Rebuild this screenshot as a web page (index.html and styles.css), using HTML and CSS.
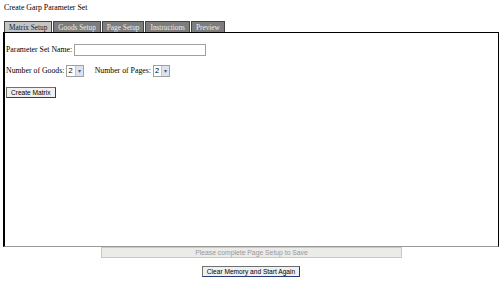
FILE: index.html
```html
<!DOCTYPE html>
<html lang="en">
<head>
    <meta charset="UTF-8">
    <title>Create Garp Parameter Set</title>
    <link rel="stylesheet" href="styles.css">
</head>
<body>

<div class="page">
    <div class="title">Create Garp Parameter Set</div>

    <!-- Pestañas -->
    <div class="tabs">
        <span class="tab active">Matrix Setup</span>
        <span class="tab">Goods Setup</span>
        <span class="tab">Page Setup</span>
        <span class="tab">Instructions</span>
        <span class="tab">Preview</span>
    </div>

    <div class="panel">
        <div class="row">
            <label>Parameter Set Name:</label>
            <span class="text-input"></span>
        </div>
        <div class="row options">
            <label>Number of Goods:</label>
            <span class="select"><span class="val">2</span><span class="arrow">&#9662;</span></span>
            <label class="second">Number of Pages:</label>
            <span class="select"><span class="val">2</span><span class="arrow">&#9662;</span></span>
        </div>
        <div class="row">
            <span class="btn">Create Matrix</span>
        </div>
    </div>

    <div class="save-bar">Please complete Page Setup to Save</div>

    <div class="footer">
        <span class="btn">Clear Memory and Start Again</span>
    </div>
</div>

</body>
</html>
```

FILE: styles.css
```css
* {
    box-sizing: border-box;
}

body {
    margin: 0;
    padding: 0;
    background-color: #ffffff;
    font-family: "Liberation Serif", serif;
    font-size: 7.8px;
    color: #000;
}

.page {
    padding: 3px 1px 0 3px;
}

.title {
    height: 18px;
    padding-left: 1px;
    line-height: 10px;
}

/* PESTAÑAS */
.tabs {
    display: flex;
    gap: 1px;
    padding-left: 1px;
    height: 11px;
}

.tab {
    height: 11px;
    padding: 0 4px;
    line-height: 11px;
    background-color: #7d7d7d;
    color: #ececec;
    border: 1px solid #444;
    border-bottom: none;
    font-size: 7.3px;
}

.tab.active {
    background-color: #c4c4c4;
    color: #222;
}

.panel {
    height: 215px;
    border: 1px solid #000;
    border-left-width: 2px;
    border-bottom: 1px solid #999;
    padding: 10px 1px;
}

.row {
    display: flex;
    align-items: center;
    height: 13px;
    margin-bottom: 8px;
}

.row.options {
    margin-bottom: 9px;
}

label.second {
    margin-left: 11px;
}

.text-input {
    width: 132px;
    height: 12px;
    margin-left: 2px;
    border: 1px solid #a0a0a0;
}

.select {
    display: flex;
    height: 12px;
    margin-left: 2px;
    border: 1px solid #a0a0a0;
    font-family: "Liberation Sans", sans-serif;
    font-size: 7.5px;
}

.select .val {
    padding: 0 2px 0 1px;
    line-height: 10px;
}

.select .arrow {
    width: 8px;
    background-color: #dde3ee;
    color: #4d5a78;
    text-align: center;
    font-size: 6px;
    line-height: 10px;
    border-left: 1px solid #c0c6d0;
}

.btn {
    display: inline-block;
    height: 11px;
    padding: 0 4px;
    line-height: 9px;
    background-color: #f0f0f0;
    border: 1px solid #707070;
    border-right-color: #283c7a;
    border-bottom-color: #283c7a;
    font-family: "Liberation Sans", sans-serif;
    font-size: 6.6px;
}

/* BARRA DE GUARDAR */
.save-bar {
    width: 301px;
    height: 11px;
    margin-left: 98px;
    background-color: #ebebe8;
    border: 1px solid #c8c8c8;
    color: #9a9a9a;
    text-align: center;
    line-height: 9px;
    font-family: "Liberation Sans", sans-serif;
    font-size: 6.8px;
}

.footer {
    margin-top: 8px;
    text-align: center;
}
```
